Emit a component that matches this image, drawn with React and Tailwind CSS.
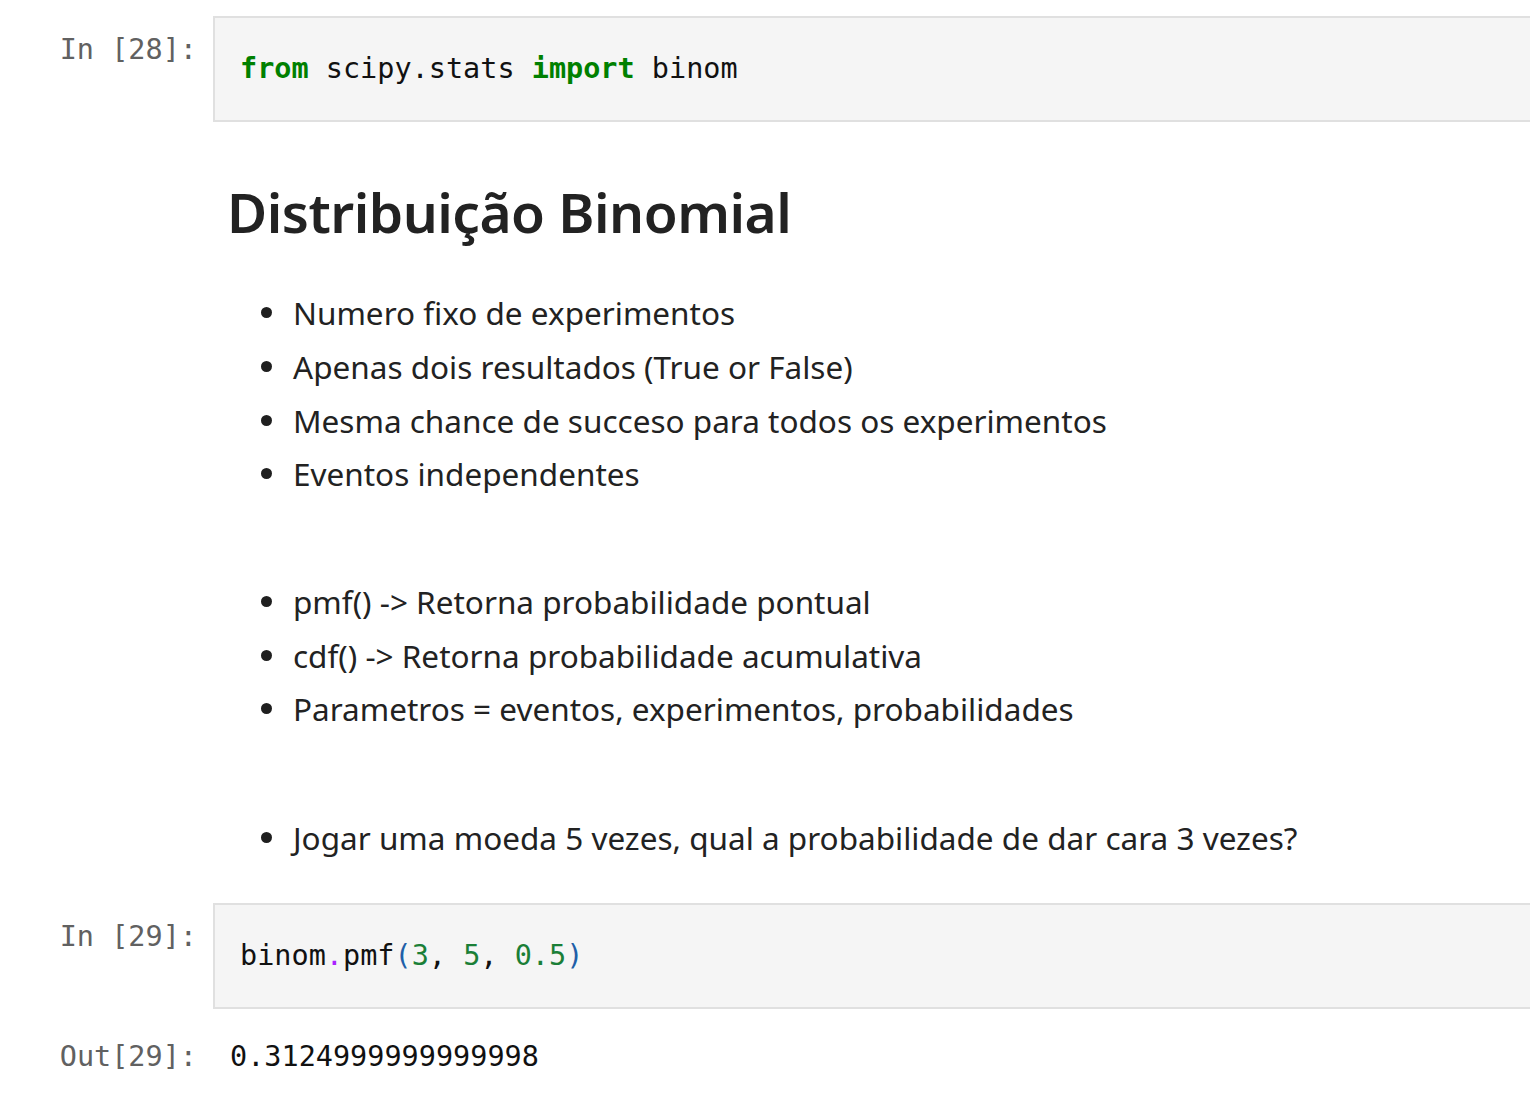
import React from 'react';

const mono = { fontFamily: '"DejaVu Sans Mono", "Liberation Mono", monospace' };

const Prompt = ({ children, className = '' }) => (
  <div
    className={`w-[213px] shrink-0 pr-[16px] text-right text-[28.5px] text-[#616161] ${className}`}
    style={mono}
  >
    {children}
  </div>
);

const CodeCell = ({ n, children }) => (
  <div className="flex">
    <Prompt className="pt-[17px] leading-[34px]">In [{n}]:</Prompt>
    <div
      className="flex-1 h-[106px] bg-[#f5f5f5] border-2 border-r-0 border-[#e0e0e0] pl-[25px] flex items-center text-[28.5px] text-[#111] leading-[34px]"
      style={mono}
    >
      <pre className="m-0" style={mono}>{children}</pre>
    </div>
  </div>
);

const Bullets = ({ items, className = '' }) => (
  <ul className={`pl-[66px] ${className}`}>
    {items.map((t) => (
      <li key={t} className="flex items-center h-[53.7px]">
        <span className="w-[11px] h-[11px] rounded-full bg-[#1f1f1f] -ml-[32px] mr-[21px] shrink-0" />
        <span>{t}</span>
      </li>
    ))}
  </ul>
);

export default function App() {
  return (
    <div className="bg-white min-h-screen w-[1530px] overflow-hidden pt-[16px]">
      <CodeCell n={28}>
        <span className="text-[#008000] font-bold">from</span> scipy.stats{' '}
        <span className="text-[#008000] font-bold">import</span> binom
      </CodeCell>

      <div
        className="pl-[227px] text-[#222] text-[31.5px]"
        style={{ fontFamily: '"Noto Sans", "Open Sans", sans-serif' }}
      >
        <h1 className="text-[55px] font-semibold leading-none mt-[62px] mb-0 tracking-[-0.5px]">
          Distribuição Binomial
        </h1>
        <Bullets
          className="mt-[47px]"
          items={[
            'Numero fixo de experimentos',
            'Apenas dois resultados (True or False)',
            'Mesma chance de succeso para todos os experimentos',
            'Eventos independentes',
          ]}
        />
        <Bullets
          className="mt-[74px]"
          items={[
            'pmf() -> Retorna probabilidade pontual',
            'cdf() -> Retorna probabilidade acumulativa',
            'Parametros = eventos, experimentos, probabilidades',
          ]}
        />
        <Bullets
          className="mt-[75px]"
          items={['Jogar uma moeda 5 vezes, qual a probabilidade de dar cara 3 vezes?']}
        />
      </div>

      <div className="mt-[38px]">
        <CodeCell n={29}>
          binom<span className="text-[#aa22ff]">.</span>pmf
          <span className="text-[#1f5fa8]">(</span>
          <span className="text-[#1a7f37]">3</span>, <span className="text-[#1a7f37]">5</span>,{' '}
          <span className="text-[#1a7f37]">0.5</span>
          <span className="text-[#1f5fa8]">)</span>
        </CodeCell>
      </div>

      <div className="flex mt-[31px] leading-[34px]">
        <Prompt>Out[29]:</Prompt>
        <div className="pl-[17px] text-[28.5px] text-[#111]" style={mono}>
          0.3124999999999998
        </div>
      </div>
    </div>
  );
}
